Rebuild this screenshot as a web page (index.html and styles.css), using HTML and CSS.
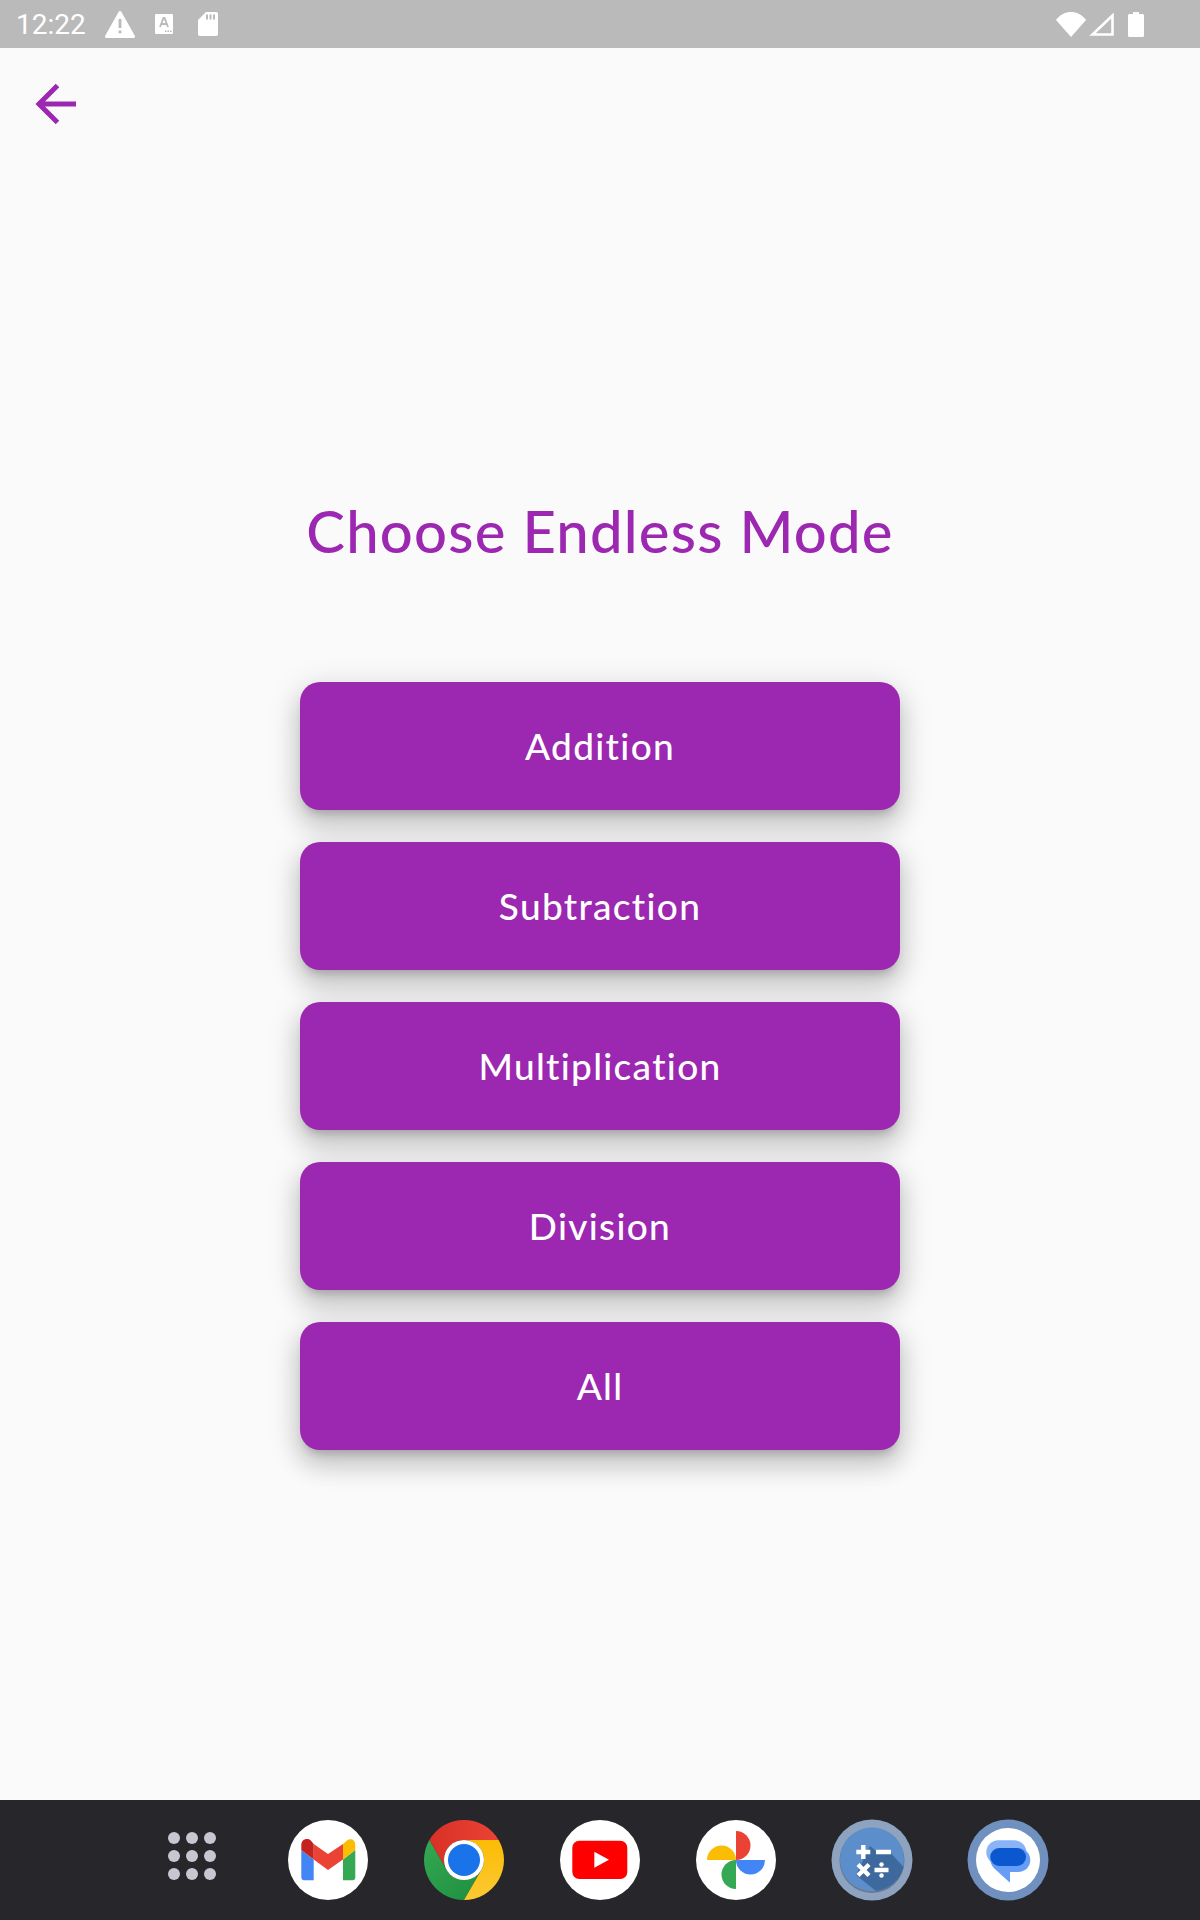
FILE: index.html
```html
<!doctype html>
<html>
  <head>
    <title>Choose Endless Mode</title>
    <link rel="stylesheet" href="styles.css">
  </head>
  <body>
    <div class="statusBar">
      <span class="clock">12:22</span>
      <svg class="statusIcon warnIcon" viewBox="0 0 30 27"><path d="M15 1.500 L28.500 25.500 H1.500 Z" fill="#fff" stroke="#fff" stroke-width="3" stroke-linejoin="round"/><path d="M13.600 8h2.800v9h-2.800z M13.600 19.500h2.800v2.800h-2.800z" fill="#bababa"/></svg>
      <svg class="statusIcon maskIcon" viewBox="0 0 18 20"><rect width="18" height="20" rx="1" fill="#fff"/><path d="M5 13 L8.500 4 H9.500 L13 13 M6.500 10 H11.500" fill="none" stroke="#bababa" stroke-width="1.800"/><path d="M10 16.500h1.500v1.500H10z M12.500 16.500H14v1.500h-1.500z M15 16.500h1.500v1.500H15z" fill="#bababa"/></svg>
      <svg class="statusIcon sdIcon" viewBox="0 0 20 24"><path d="M8 0 H18 a2 2 0 0 1 2 2 V22 a2 2 0 0 1 -2 2 H2 a2 2 0 0 1 -2 -2 V8 Z" fill="#fff"/><path d="M8 2.500h2v5H8z M11.500 2.500h2v5h-2z M15 2.500h2v5h-2z" fill="#bababa"/></svg>
      <span class="statusSpacer"></span>
      <svg class="statusIcon wifiIcon" viewBox="0 0 30 25"><path d="M0 8 C8 -2.600 22 -2.600 30 8 L15 25 Z" fill="#fff"/></svg>
      <svg class="statusIcon signalIcon" viewBox="0 0 25 24"><path d="M23.500 3.500 V22.500 H3.500 Z" fill="none" stroke="#fff" stroke-width="2.600"/></svg>
      <svg class="statusIcon batteryIcon" viewBox="0 0 16 25"><path d="M5 0 H11 V2 H14.500 a1.500 1.500 0 0 1 1.500 1.500 V23.500 a1.500 1.500 0 0 1 -1.500 1.500 H1.500 a1.500 1.500 0 0 1 -1.500 -1.500 V3.500 a1.500 1.500 0 0 1 1.500 -1.500 H5 Z" fill="#fff"/></svg>
    </div>

    <div id="mainTab">
      <div class="backRow">
        <svg class="backArrow" viewBox="0 0 42 42"><path d="M41 21 H4 M22.500 2.500 L4 21 L22.500 39.500" fill="none" stroke="#9c27b0" stroke-width="5"/></svg>
      </div>
      <h1 class="title">Choose Endless Mode</h1>
      <div class="modeList">
        <button class="modeButton">Addition</button>
        <button class="modeButton">Subtraction</button>
        <button class="modeButton">Multiplication</button>
        <button class="modeButton">Division</button>
        <button class="modeButton">All</button>
      </div>
    </div>

    <div class="dock">
      <svg class="dockIcon" viewBox="0 0 80 80">
        <g fill="#c8c6d0">
          <circle cx="22" cy="18" r="6"/><circle cx="40" cy="18" r="6"/><circle cx="58" cy="18" r="6"/>
          <circle cx="22" cy="36" r="6"/><circle cx="40" cy="36" r="6"/><circle cx="58" cy="36" r="6"/>
          <circle cx="22" cy="54" r="6"/><circle cx="40" cy="54" r="6"/><circle cx="58" cy="54" r="6"/>
        </g>
      </svg>

      <svg class="dockIcon" viewBox="0 0 80 80">
        <circle cx="40" cy="40" r="40" fill="#fff"/>
        <path d="M13.300 30 L25.700 39.500 V60.300 H16.300 a3 3 0 0 1 -3 -3 Z" fill="#4285f4"/>
        <path d="M55 39.500 L67.300 30 V57.300 a3 3 0 0 1 -3 3 H55 Z" fill="#34a853"/>
        <path d="M25.700 24 L40 34 L55 24 V39.500 L40 50 L25.700 39.500 Z" fill="#ea4335"/>
        <path d="M13.300 30 V25 c0 -5.500 5.700 -7.500 9.500 -4.500 L25.700 24 V39.500 Z" fill="#c5221f"/>
        <path d="M55 24 l4 -3.500 c3.300 -2.700 8.300 -1 8.300 4.500 V30 L55 39.500 Z" fill="#fbbc04"/>
      </svg>

      <svg class="dockIcon" viewBox="0 0 80 80">
        <defs>
          <linearGradient id="chromeRed" x1="0" x2="1" y1="0" y2="0"><stop offset="0" stop-color="#d93025"/><stop offset="1" stop-color="#ea4335"/></linearGradient>
          <linearGradient id="chromeGreen" x1="0" x2="1" y1="0" y2="1"><stop offset="0" stop-color="#34a853"/><stop offset="1" stop-color="#1e8e3e"/></linearGradient>
          <linearGradient id="chromeYellow" x1="0" x2="0" y1="0" y2="1"><stop offset="0" stop-color="#fbbc04"/><stop offset="1" stop-color="#fcc934"/></linearGradient>
        </defs>
        <path d="M40 20 H74.640 A40 40 0 0 0 5.360 20 L22.680 50 A20 20 0 0 1 40 20 Z" fill="url(#chromeRed)"/>
        <path d="M22.680 50 L5.360 20 A40 40 0 0 0 40 80 L57.320 50 A20 20 0 0 1 22.680 50 Z" fill="url(#chromeGreen)"/>
        <path d="M57.320 50 L40 80 A40 40 0 0 0 74.640 20 H40 A20 20 0 0 1 57.320 50 Z" fill="url(#chromeYellow)"/>
        <circle cx="40" cy="40" r="20" fill="#fff"/>
        <circle cx="40" cy="40" r="16" fill="#1a73e8"/>
      </svg>

      <svg class="dockIcon" viewBox="0 0 80 80">
        <circle cx="40" cy="40" r="40" fill="#fff"/>
        <rect x="12.300" y="20.700" width="55" height="38.300" rx="7" fill="#f00"/>
        <path d="M34.300 31.700 L49 39.700 L34.300 47.700 Z" fill="#fff"/>
      </svg>

      <svg class="dockIcon" viewBox="0 0 80 80">
        <circle cx="40" cy="40" r="40" fill="#fff"/>
        <path d="M40 11 a14.500 14.500 0 0 1 0 29 Z" fill="#ea4335"/>
        <path d="M11 40 a14.500 14.500 0 0 1 29 0 Z" fill="#fbbc04"/>
        <path d="M69 40 a14.500 14.500 0 0 1 -29 0 Z" fill="#4285f4"/>
        <path d="M40 69 a14.500 14.500 0 0 1 0 -29 Z" fill="#34a853"/>
      </svg>

      <svg class="dockIcon" viewBox="0 0 80 80">
        <circle cx="40" cy="40" r="40.500" fill="#8ea3bf"/>
        <circle cx="40" cy="40.500" r="32.500" fill="#6b7688"/>
        <circle cx="40" cy="39.500" r="32" fill="#5b8ecb"/>
        <path d="M38 26 L44 31 H57 L71.500 47 A32 32 0 0 1 44 71 L24 55 Z" fill="#3e699e"/>
        <path d="M24.300 32 H38.300 M31.300 25 V39 M44 32 H59 M26 44.500 L37 55.500 M37 44.500 L26 55.500 M42.500 50 H56.500" fill="none" stroke="#fff" stroke-width="4.400"/>
        <circle cx="49.500" cy="44.500" r="2.200" fill="#fff"/>
        <circle cx="49.500" cy="55.500" r="2.200" fill="#fff"/>
      </svg>

      <svg class="dockIcon" viewBox="0 0 80 80">
        <circle cx="40" cy="40" r="40.500" fill="#7090bf"/>
        <circle cx="40" cy="40" r="32" fill="#fff"/>
        <rect x="18.300" y="20.300" width="40" height="24" rx="12" fill="#8ab4f8"/>
        <path d="M32 28 H50 C57 28 62.300 33 62.300 40 C62.300 47 57 52 50 52 H42 V62.700 L28 50 C24 47 22 42 22 38 C22 32 26 28 32 28 Z" fill="#669df6"/>
        <rect x="22.300" y="28" width="35.700" height="18" rx="9" fill="#0b57d0"/>
      </svg>
    </div>
  </body>
</html>
```
FILE: styles.css
```css
* {
  box-sizing: border-box;
}

body {
  margin: 0;
  height: 1920px;
  display: flex;
  flex-direction: column;
  background: #fafafa;
  font-family: "Lato", "Open Sans", sans-serif;
  overflow: hidden;
}

.statusBar {
  height: 48px;
  flex: none;
  display: flex;
  align-items: center;
  padding: 0 56px 0 16px;
  background: #bababa;
}

.clock {
  font-family: "Roboto", sans-serif;
  font-size: 28px;
  color: #fff;
  margin-right: 19px;
}

.statusIcon {
  display: block;
  flex: none;
}

.warnIcon {
  width: 30px;
  height: 27px;
  margin-right: 20px;
}

.maskIcon {
  width: 18px;
  height: 20px;
  margin: 0 25px 0 0;
}

.sdIcon {
  width: 20px;
  height: 24px;
}

.statusSpacer {
  flex: 1;
}

.wifiIcon {
  width: 30px;
  height: 25px;
  margin-right: 3px;
}

.signalIcon {
  width: 25px;
  height: 24px;
  margin-right: 14px;
}

.batteryIcon {
  width: 16px;
  height: 25px;
}

#mainTab {
  flex: 1;
  display: flex;
  flex-direction: column;
  align-items: center;
}

.backRow {
  align-self: flex-start;
  padding: 35px 0 0 35px;
}

.backArrow {
  display: block;
  width: 42px;
  height: 42px;
}

.title {
  margin: 371px 0 0;
  font-size: 58px;
  line-height: 70px;
  font-weight: 500;
  color: #9c27b0;
  letter-spacing: 1.2px;
}

.modeList {
  margin-top: 116px;
  display: flex;
  flex-direction: column;
  gap: 32px;
}

.modeButton {
  width: 600px;
  height: 128px;
  padding: 0 0 2px;
  border: none;
  border-radius: 20px;
  background: #9c27b0;
  color: #fff;
  font-family: inherit;
  font-size: 37px;
  font-weight: 500;
  letter-spacing: 1.3px;
  box-shadow: 0 8px 10px -5px rgba(0, 0, 0, 0.2), 0 16px 24px 2px rgba(0, 0, 0, 0.14), 0 6px 30px 5px rgba(0, 0, 0, 0.1);
}

.dock {
  height: 120px;
  flex: none;
  display: flex;
  justify-content: center;
  align-items: center;
  gap: 56px;
  background: #26262b;
}

.dockIcon {
  display: block;
  width: 80px;
  height: 80px;
  overflow: visible;
}
```
